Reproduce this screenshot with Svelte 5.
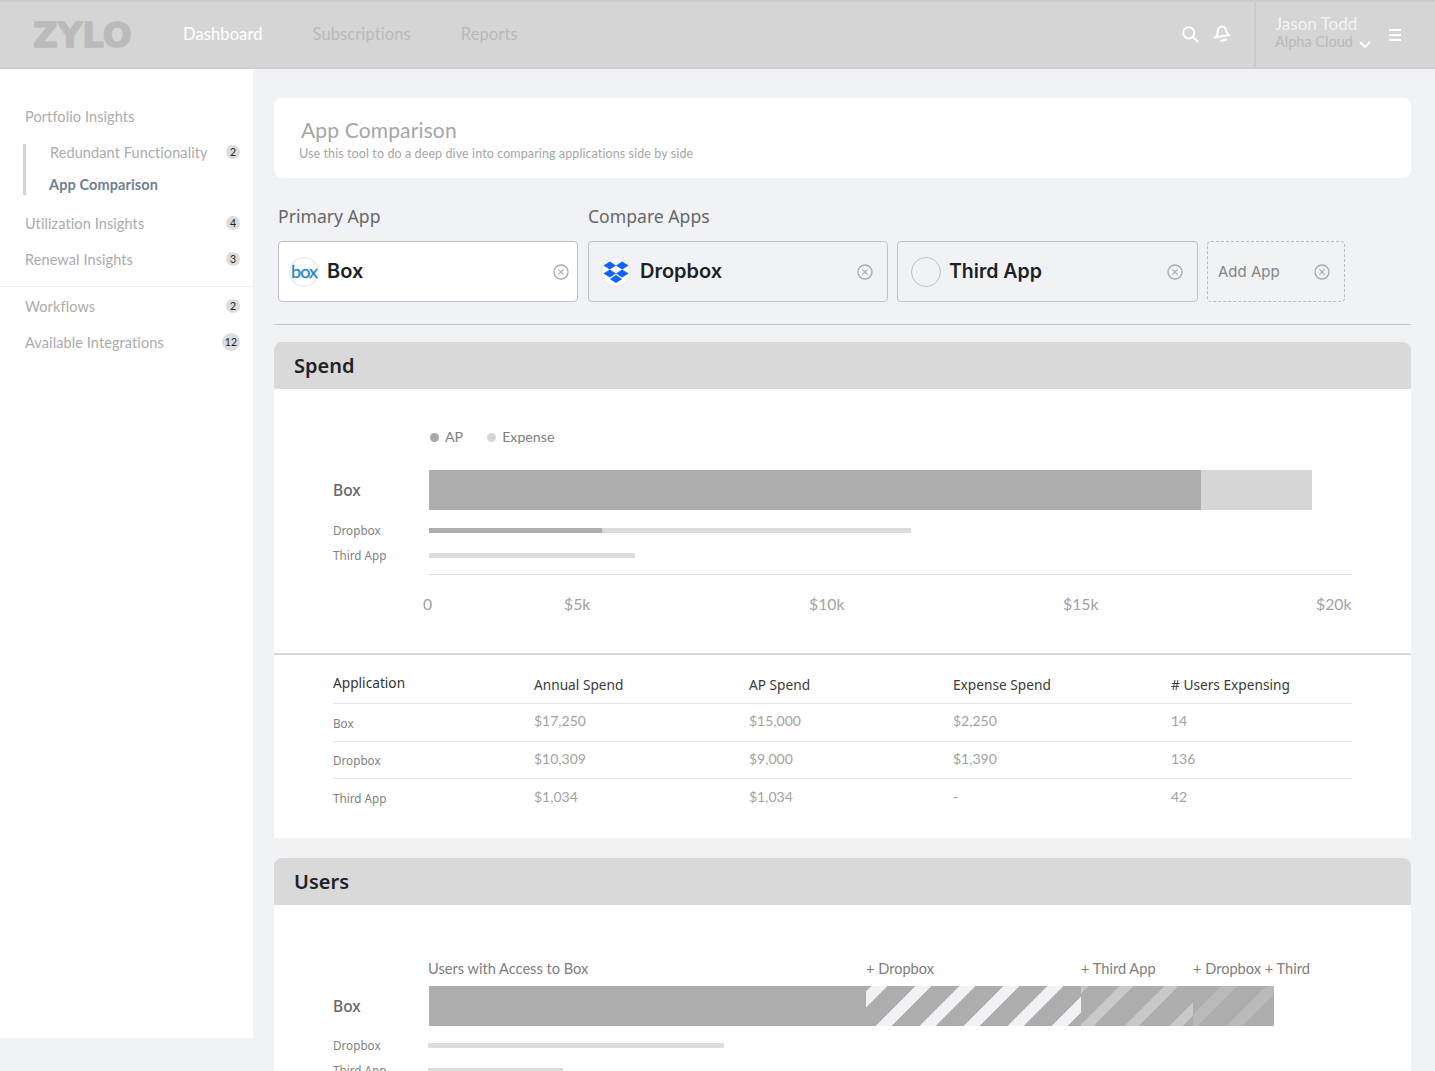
<script>
  const nav = ['Dashboard', 'Subscriptions', 'Reports'];
  const rows = [
    ['Box', '$17,250', '$15,000', '$2,250', '14'],
    ['Dropbox', '$10,309', '$9,000', '$1,390', '136'],
    ['Third App', '$1,034', '$1,034', '-', '42']
  ];
</script>

{#snippet close()}
  <svg class="x" viewBox="0 0 16 16" width="16" height="16" fill="none" stroke="#a9a9a9">
    <circle cx="8" cy="8" r="7" stroke-width="1.3" />
    <path d="M5.4 5.4l5.2 5.2M10.6 5.4l-5.2 5.2" stroke-width="1.1" />
  </svg>
{/snippet}

<div class="page">
  <header class="top">
    <div class="logo">ZYLO</div>
    <nav>
      {#each nav as item, i}
        <span class:active={i === 0}>{item}</span>
      {/each}
    </nav>
    <div class="icons">
      <svg viewBox="0 0 18 18" width="18" height="18" fill="none" stroke="#fff" stroke-width="2" stroke-linecap="round">
        <circle cx="7.8" cy="7.8" r="5.6" /><path d="M12 12l4.5 4.5" />
      </svg>
      <svg viewBox="0 0 18 18" width="18" height="18" fill="none" stroke="#fff" stroke-width="1.9" stroke-linecap="round" stroke-linejoin="round">
        <path d="M3.500 11.500C5 9 4 6 5.500 3.500 7 1 10.500 1 12 3c1.500 2.500 1 5 3.500 7" />
        <path d="M1.500 12.500l15-2.500" />
        <path d="M8 16l5-1.500" />
      </svg>
    </div>
    <div class="user">
      <div class="who">
        <div class="name">Jason Todd</div>
        <div class="org">Alpha Cloud
          <svg viewBox="0 0 12 8" width="12" height="8" fill="none" stroke="#fff" stroke-width="2" stroke-linecap="round" stroke-linejoin="round"><path d="M1.500 1.500L6 6l4.500-4.500" /></svg>
        </div>
      </div>
      <div class="burger"><i></i><i></i><i></i></div>
    </div>
  </header>

  <div class="body">
    <aside>
      <div class="group">
        <div class="item"><span>Portfolio Insights</span></div>
        <div class="sub">
          <div class="subitem"><span>Redundant Functionality</span><b>2</b></div>
          <div class="subitem current"><span>App Comparison</span></div>
        </div>
        <div class="item util"><span>Utilization Insights</span><b>4</b></div>
        <div class="item"><span>Renewal Insights</span><b>3</b></div>
      </div>
      <div class="group second">
        <div class="item"><span>Workflows</span><b>2</b></div>
        <div class="item"><span>Available Integrations</span><b class="wide">12</b></div>
      </div>
    </aside>

    <main>
      <section class="intro">
        <h1>App Comparison</h1>
        <p>Use this tool to do a deep dive into comparing applications side by side</p>
      </section>

      <div class="pickers">
        <div class="primary">
          <div class="plabel">Primary App</div>
          <div class="chip white">
            <span class="badge boxlogo">box</span>
            <strong>Box</strong>
            {@render close()}
          </div>
        </div>
        <div class="compare">
          <div class="plabel">Compare Apps</div>
          <div class="chips">
            <div class="chip drop">
              <span class="badge">
                <svg viewBox="0 0 26 24" fill="#0f62fe">
                  <path d="M6.800 1.500L.5 5.500l6.300 4 6.200-4zM19.200 1.500L13 5.500l6.200 4 6.300-4zM.5 13.500l6.300 4 6.200-4-6.200-4zM19.200 9.500L13 13.500l6.200 4 6.300-4zM6.800 18.900l6.200 4 6.200-4-6.200-4z" />
                </svg>
              </span>
              <strong>Dropbox</strong>
              {@render close()}
            </div>
            <div class="chip third">
              <span class="badge empty"></span>
              <strong>Third App</strong>
              {@render close()}
            </div>
            <div class="chip add">
              <span>Add App</span>
              {@render close()}
            </div>
          </div>
        </div>
      </div>

      <section class="card">
        <h2>Spend</h2>
        <div class="legend">
          <span class="lap"><i class="ap"></i>AP</span>
          <span><i class="exp"></i>Expense</span>
        </div>
        <div class="chart">
          <div class="barrow main">
            <span class="rlabel">Box</span>
            <div class="track big"><div class="seg ap1"></div><div class="seg ex1"></div></div>
          </div>
          <div class="barrow thin first">
            <span class="rlabel">Dropbox</span>
            <div class="track small"><div class="seg ap2"></div><div class="seg ex2"></div></div>
          </div>
          <div class="barrow thin">
            <span class="rlabel">Third App</span>
            <div class="track small"><div class="seg ex3"></div></div>
          </div>
          <div class="axis">
            <span>0</span><span>$5k</span><span>$10k</span><span>$15k</span><span>$20k</span>
          </div>
        </div>
        <div class="table">
          <div class="tr head">
            <div class="app">Application</div><div>Annual Spend</div><div>AP Spend</div><div>Expense Spend</div><div># Users Expensing</div>
          </div>
          {#each rows as row}
            <div class="tr">
              {#each row as cell, i}
                <div class:app={i === 0}>{cell}</div>
              {/each}
            </div>
          {/each}
        </div>
      </section>

      <section class="card users">
        <h2>Users</h2>
        <div class="ulabels">
          <span class="u0">Users with Access to Box</span><span class="u1">+ Dropbox</span><span class="u2">+ Third App</span><span class="u3">+ Dropbox + Third</span>
        </div>
        <div class="barrow main">
          <span class="rlabel">Box</span>
          <div class="track big">
            <div class="seg us0"></div><div class="seg us1"></div><div class="seg us2"></div><div class="seg us3"></div>
          </div>
        </div>
        <div class="barrow thin ufirst">
          <span class="rlabel">Dropbox</span>
          <div class="track small"><div class="seg ud"></div></div>
        </div>
        <div class="barrow thin">
          <span class="rlabel">Third App</span>
          <div class="track small"><div class="seg ut"></div></div>
        </div>
      </section>
    </main>
  </div>
</div>

<style>
  :global(body) { margin: 0; background: #f0f2f5; font-family: "Lato", "Open Sans", sans-serif; }
  .page { height: 1071px; overflow: hidden; display: flex; flex-direction: column; }

  .top { height: 69px; flex: none; box-sizing: border-box; background: #d5d5d5; border-top: 2px solid #cdcdcd; border-bottom: 2px solid #cfcfcf; display: flex; align-items: center; }
  .logo { width: 183px; padding-left: 33px; box-sizing: border-box; font: 700 34px "DejaVu Sans", sans-serif; color: #bababa; -webkit-text-stroke: 1.500px #bababa; }
  nav { display: flex; gap: 50px; flex: 1; font-size: 16.500px; color: #b9b9b9; letter-spacing: .1px; margin-top: -2px; }
  nav .active { color: #fff; }
  .icons { display: flex; gap: 14px; margin: -2px 23px 0 0; }
  .user { width: 181px; height: 100%; box-sizing: border-box; border-left: 2px solid #c9c9c9; padding-left: 19px; display: flex; align-items: center; }
  .who { width: 114px; margin-top: -5px; }
  .name { font-size: 17px; color: #f3f3f3; line-height: 20px; }
  .org { font-size: 14.500px; color: #b9b9b9; line-height: 16px; display: flex; align-items: center; gap: 6px; }
  .org svg { margin-top: 5px; }
  .burger { display: flex; flex-direction: column; gap: 3px; }
  .burger i { display: block; width: 12px; height: 2px; background: #fff; }

  .body { display: flex; flex: 1; min-height: 0; }
  aside { width: 253px; height: 969px; flex: none; background: #fff; box-sizing: border-box; padding-top: 30px; color: #ababab; font-size: 14.500px; }
  .group { padding: 0 13px 8px 25px; }
  .second { border-top: 1px solid #eeeff1; padding-top: 2px; }
  .item { height: 36px; display: flex; align-items: center; justify-content: space-between; letter-spacing: .1px; }
  .util { margin-top: 11px; }
  .sub { border-left: 3px solid #d3d3d3; margin-left: -2px; margin-top: 9px; height: 51px; display: flex; flex-direction: column; gap: 14px; }
  .subitem { height: 18px; padding-left: 24px; display: flex; justify-content: space-between; align-items: center; letter-spacing: .1px; }
  .item span, .subitem span { margin-top: -1px; }
  .subitem.current { color: #6f7f92; font-weight: 700; padding-left: 23px; }
  .group b { width: 14px; height: 14px; margin-bottom: 2px; border-radius: 50%; background: #dcdcdc; color: #222; font-size: 10.500px; font-weight: 400; display: flex; align-items: center; justify-content: center; }
  .group b.wide { width: 18px; height: 18px; }

  main { flex: 1; min-width: 0; padding: 29px 24px 0 21px; }
  .intro { height: 80px; background: #fff; border-radius: 8px; box-sizing: border-box; padding: 18px 26px 0 25px; }
  h1 { margin: 0 0 0 2px; font-size: 21px; font-weight: 400; color: #a6a6a6; line-height: 27px; letter-spacing: .15px; }
  .intro p { margin: 2px 0 0; font-size: 12.500px; color: #a6a6a6; line-height: 17px; letter-spacing: .1px; }

  .pickers { display: flex; gap: 10px; padding: 27px 0 22px 4px; border-bottom: 1px solid #c3c5c8; margin-bottom: 17px; }
  .plabel { font: 17.600px/22px "Noto Sans", sans-serif; color: #666; margin-bottom: 14px; }
  .chips { display: flex; gap: 9px; }
  .chip { width: 300px; height: 61px; box-sizing: border-box; border: 1px solid #bfc1c5; border-radius: 4px; display: flex; align-items: center; padding: 0 14px 0 12px; }
  .chip.white { background: #fff; padding-left: 10px; padding-right: 8px; }
  .chip strong { flex: 1; font: 600 20px "Inter", sans-serif; color: #1c1f24; margin: 0 0 1px 8px; }
  .chip.drop strong { margin-left: 9px; }
  .chip.third { width: 301px; padding-left: 13px; }
  .chip.third strong { font-size: 19.500px; }
  .badge { width: 30px; height: 30px; flex: none; box-sizing: border-box; border-radius: 50%; border: 1px solid #e3e4e6; background: #fff; display: flex; align-items: center; justify-content: center; }
  .badge svg { width: 26px; height: 24px; }
  .boxlogo { font: 18px "Lato", sans-serif; letter-spacing: -1px; color: #1b87c9; -webkit-text-stroke: .3px #1b87c9; padding-bottom: 2px; }
  .badge.empty { background: transparent; border-color: #bfc1c5; }
  .x { flex: none; }
  .add { width: 138px; border: 1px dashed #b9bbbf; padding-left: 10px; font: 15px "Inter", sans-serif; color: #858585; justify-content: space-between; padding-right: 14px; }

  .card { background: #fff; border-radius: 8px 8px 0 0; margin-bottom: 20px; height: 496px; }
  h2 { margin: 0; height: 47px; background: #d9d9d9; border-radius: 8px 8px 0 0; padding-left: 20px; font: 600 20px/47px "Noto Sans", sans-serif; color: #1f2226; }

  .legend { display: flex; gap: 25px; padding: 39px 0 0 155px; font-size: 14.200px; line-height: 18px; color: #7e7e7e; }
  .legend .lap { margin-left: 1px; margin-right: -1px; }
  .legend i { display: inline-block; width: 9px; height: 9px; border-radius: 50%; margin-right: 6px; }
  .legend .ap { background: #a8a8a8; }
  .legend .exp { background: #d6d6d6; }
  .chart { padding: 24px 59px 0; }

  .barrow { display: flex; align-items: center; }
  .rlabel { width: 96px; flex: none; }
  .main .rlabel { font: 500 15.500px "Noto Sans", sans-serif; color: #666; }
  .thin .rlabel { font: 11.700px "Noto Sans", sans-serif; color: #7f7f7f; padding-bottom: 2px; }
  .track { display: flex; flex: 1; }
  .big { height: 40px; }
  .small { height: 5px; }
  .thin { height: 25px; }
  .first { margin-top: 8px; }
  .ap1 { width: 772px; background: #adadad; }
  .ex1 { width: 111px; background: #d6d6d6; }
  .ap2 { width: 173px; background: #adadad; }
  .ex2 { width: 309px; background: #dcdcdc; }
  .ex3 { width: 206px; background: #dcdcdc; }

  .axis { margin: 6px 0 0 96px; border-top: 1px solid #dedede; padding-top: 19px; height: 79px; box-sizing: border-box; display: grid; grid-template-columns: 135px 245px 254px 253px auto; font-size: 15.800px; line-height: 20px; color: #a2a2a2; }
  .axis span:first-child { margin-left: -6px; }

  .table { border-top: 2px solid #d8d8d8; padding: 0 59px; }
  .tr { display: grid; grid-template-columns: 201px 215px 204px 218px 1fr; height: 37.500px; align-items: center; border-bottom: 1px solid #e4e4e4; padding-bottom: 3px; font-size: 14px; color: #a2a2a2; box-sizing: border-box; }
  .tr:last-child { border-bottom: 0; }
  .tr .app { font: 11.700px "Noto Sans", sans-serif; color: #7f7f7f; padding-top: 4px; }
  .tr.head { height: 49px; color: #3b3b3b; padding: 10px 0 0; font-family: "Noto Sans", sans-serif; font-size: 13.700px; }
  .tr.head .app { font-size: 13.700px; color: #333; padding: 0 0 4px; }

  .users { height: auto; }
  .ulabels { display: flex; padding: 55px 0 0 154px; font-size: 14.600px; line-height: 18px; color: #7e7e7e; }
  .u0 { width: 438px; } .u1 { width: 215px; } .u2 { width: 112px; }
  .users .barrow { padding-left: 59px; }
  .users .main { margin-top: 8px; }
  .ufirst { margin-top: 7px; }
  .us0 { width: 437px; background: #adadad; }
  .us1 { width: 215px; background: repeating-linear-gradient(135deg, #adadad 0 4px, #f0f2f5 4px 15px, #adadad 15px 31.100px); }
  .us2 { width: 112px; background: repeating-linear-gradient(135deg, #c9c9c9 0 5px, #adadad 5px 27px, #c9c9c9 27px 31.800px); }
  .us3 { width: 81px; background: repeating-linear-gradient(135deg, #adadad 0 20px, #b9b9b9 20px 31.800px); }
  .ud { width: 296px; margin-left: -1px; background: #dcdcdc; }
  .ut { width: 135px; margin-left: -1px; background: #dcdcdc; }
</style>
